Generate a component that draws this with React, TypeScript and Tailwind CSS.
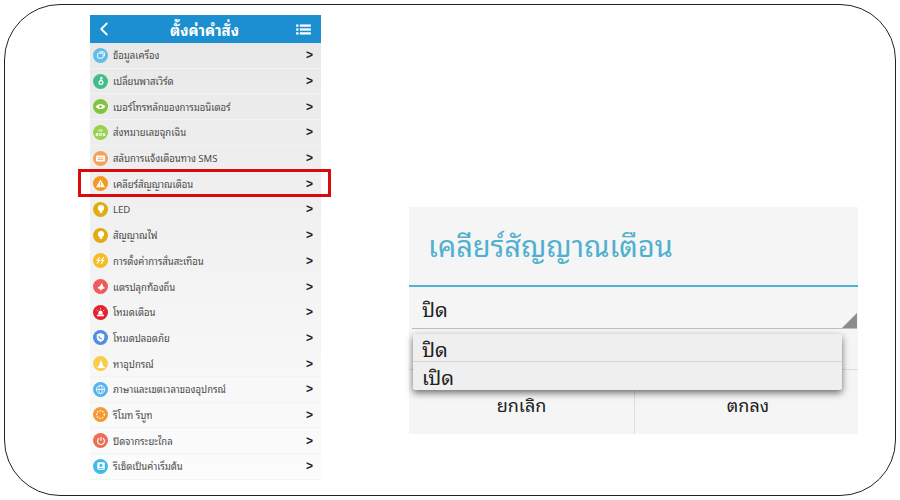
import { ChevronLeft } from "lucide-react";

const font = { thai: "font-['Noto_Sans_Thai_Looped','Loma','Garuda','Tahoma','Noto_Sans','Liberation_Sans',sans-serif]" };

const Bulb = () => (
  <svg viewBox="0 0 16 16" className="w-[10px] h-[10px]">
    <circle cx="8" cy="6.5" r="5" fill="#fff" />
    <rect x="5.8" y="11" width="4.4" height="3.2" rx="1" fill="#fff" />
  </svg>
);

const rows = [
  {
    label: "ข้อมูลเครื่อง",
    color: "bg-[#5fbdea]",
    icon: (
      <svg viewBox="0 0 16 16" className="w-[10px] h-[10px]" fill="none" stroke="#fff" strokeWidth="1.6">
        <rect x="2.5" y="5" width="9" height="8" rx="2" />
        <path d="M5.5 3h6a2 2 0 0 1 2 2v5" />
      </svg>
    ),
  },
  {
    label: "เปลี่ยนพาสเวิร์ด",
    color: "bg-[#41bd8c]",
    icon: (
      <svg viewBox="0 0 16 16" className="w-[10px] h-[10px]" fill="none" stroke="#fff" strokeWidth="2">
        <circle cx="8" cy="10.5" r="3" />
        <path d="M8 7.5V1M8 3.5h3" />
      </svg>
    ),
  },
  {
    label: "เบอร์โทรหลักของการมอนิเตอร์",
    color: "bg-[#82c43e]",
    icon: (
      <svg viewBox="0 0 16 16" className="w-[11px] h-[11px]">
        <path d="M1 8c3.5-5 10.500-5 14 0-3.500 5-10.500 5-14 0z" fill="#fff" />
        <circle cx="8" cy="8" r="2" fill="#82c43e" />
      </svg>
    ),
  },
  {
    label: "ส่งหมายเลขฉุกเฉิน",
    color: "bg-[#98d24f]",
    icon: (
      <svg viewBox="0 0 16 16" className="w-[11px] h-[11px]" fill="none" stroke="#fff" strokeWidth="1.2">
        <path d="M4.500 6a4 4 0 0 1 7 0M6.500 6.500a2 2 0 0 1 3 0" />
        <path d="M1.500 9.500h3v1.500h-3v1.500h3M6.500 9.500h3v3h-3zM14.500 9.500h-3v1.500h3v1.500h-3" />
      </svg>
    ),
  },
  {
    label: "สลับการแจ้งเตือนทาง SMS",
    color: "bg-[#f0a35a]",
    icon: (
      <svg viewBox="0 0 16 16" className="w-[11px] h-[11px]">
        <rect x="1.500" y="3.500" width="13" height="9" rx="1.500" fill="#fff" />
        <path d="M4 7h8M4 9.500h8" stroke="#f0a35a" strokeWidth="1.200" />
      </svg>
    ),
  },
  {
    label: "เคลียร์สัญญาณเตือน",
    color: "bg-[#f29a1f]",
    icon: (
      <svg viewBox="0 0 16 16" className="w-[11px] h-[11px]">
        <path d="M8 2l6.500 11.500h-13z" fill="#fff" />
        <path d="M8 6v4M8 11v1.200" stroke="#f29a1f" strokeWidth="1.300" />
      </svg>
    ),
  },
  { label: "LED", color: "bg-[#e2ab12]", icon: <Bulb /> },
  { label: "สัญญาณไฟ", color: "bg-[#e2ab12]", icon: <Bulb /> },
  {
    label: "การตั้งค่าการสั่นสะเทือน",
    color: "bg-[#f5bd22]",
    icon: (
      <svg viewBox="0 0 16 16" className="w-[11px] h-[11px]" fill="none" stroke="#fff" strokeWidth="1.500">
        <path d="M7 3L3 7.500h3.500L3 12.500M13 3L9 7.500h3.500L9 12.500" />
      </svg>
    ),
  },
  {
    label: "แตรปลุกท้องถิ่น",
    color: "bg-[#ef5b5b]",
    icon: (
      <svg viewBox="0 0 16 16" className="w-[10px] h-[10px]">
        <path d="M9 1.500L12 8l2.500 1.500L9 12l-2 2.500L6 11 2 9.500 7 6z" fill="#fff" />
      </svg>
    ),
  },
  {
    label: "โหมดเตือน",
    color: "bg-[#e0232e]",
    icon: (
      <svg viewBox="0 0 16 16" className="w-[11px] h-[11px]">
        <path d="M5 11V8a3 3 0 0 1 6 0v3z" fill="#fff" />
        <rect x="3" y="11" width="10" height="2.500" fill="#fff" />
        <path d="M8 1.500v2M2.500 4l1.500 1.500M13.500 4L12 5.500" stroke="#fff" strokeWidth="1.200" />
      </svg>
    ),
  },
  {
    label: "โหมดปลอดภัย",
    color: "bg-[#4f8de0]",
    icon: (
      <svg viewBox="0 0 16 16" className="w-[11px] h-[11px]">
        <path d="M8 1.500l5.500 2v4.500c0 3.500-2.500 5.500-5.500 6.500-3-1-5.500-3-5.500-6.500V3.500z" fill="#fff" />
        <path d="M6 5.500c-.5 2.500 1.500 4.500 4 4.500" stroke="#4f8de0" strokeWidth="1.500" fill="none" />
      </svg>
    ),
  },
  {
    label: "หาอุปกรณ์",
    color: "bg-[#f8cf4a]",
    icon: (
      <svg viewBox="0 0 16 16" className="w-[10px] h-[10px]">
        <path d="M8 1.500l4.500 11.500h-9z" fill="#fff" />
        <rect x="2" y="12.500" width="12" height="2" fill="#fff" />
      </svg>
    ),
  },
  {
    label: "ภาษาและเขตเวลาของอุปกรณ์",
    color: "bg-[#54b3ea]",
    icon: (
      <svg viewBox="0 0 16 16" className="w-[11px] h-[11px]" fill="none" stroke="#fff" strokeWidth="1.200">
        <circle cx="8" cy="8" r="6" />
        <ellipse cx="8" cy="8" rx="2.500" ry="6" />
        <path d="M2 8h12" />
      </svg>
    ),
  },
  {
    label: "รีโมท รีบูท",
    color: "bg-[#f49a32]",
    icon: (
      <svg viewBox="0 0 16 16" className="w-[11px] h-[11px]" fill="none" stroke="#fff" strokeWidth="1.800" strokeDasharray="2 2">
        <circle cx="8" cy="8" r="5.500" />
      </svg>
    ),
  },
  {
    label: "ปิดจากระยะไกล",
    color: "bg-[#ec6e55]",
    icon: (
      <svg viewBox="0 0 16 16" className="w-[10px] h-[10px]" fill="none" stroke="#fff" strokeWidth="1.800">
        <path d="M5 3.500a5.500 5.500 0 1 0 6 0M8 1.500v6" />
      </svg>
    ),
  },
  {
    label: "รีเซ็ตเป็นค่าเริ่มต้น",
    color: "bg-[#3fbbe8]",
    icon: (
      <svg viewBox="0 0 16 16" className="w-[10px] h-[10px]">
        <rect x="2" y="2" width="12" height="12" rx="2" fill="#fff" />
        <circle cx="8" cy="7" r="2.500" fill="#3fbbe8" />
        <path d="M4 12h8" stroke="#3fbbe8" strokeWidth="1.200" />
      </svg>
    ),
  },
];

export default function App() {
  return (
    <div className={`relative w-[900px] h-[500px] bg-white p-1 ${font.thai}`}>
      <div className="flex h-full w-full rounded-[56px] border border-[#222] bg-white pl-[85px] pt-[10px]">
        {/* Phone list */}
        <div className="relative w-[231px] shrink-0">
          <div className="flex h-[28px] items-center justify-between bg-[#1b8fd0] pl-[3px] pr-[10px] text-white">
            <ChevronLeft className="h-[22px] w-[22px]" strokeWidth={2} />
            <span className="ml-[-2px] pb-[1px] text-[15px] leading-[20px] font-bold">ตั้งค่าคำสั่ง</span>
            <svg viewBox="0 0 16 12" className="h-[11px] w-[15px]" fill="#fff">
              <rect x="0" y="0.500" width="2.500" height="2.500" />
              <rect x="0" y="4.750" width="2.500" height="2.500" />
              <rect x="0" y="9" width="2.500" height="2.500" />
              <rect x="4" y="0.500" width="12" height="2.500" />
              <rect x="4" y="4.750" width="12" height="2.500" />
              <rect x="4" y="9" width="12" height="2.500" />
            </svg>
          </div>
          <div className="bg-gradient-to-b from-[#e9e9e9] to-[#fcfcfc]">
            {rows.map((row) => (
              <div key={row.label} className="flex h-[25.700px] items-center border-b border-[#f3f3f3] pl-[3px] pr-[8px]">
                <span className={`flex h-[15px] w-[15px] shrink-0 items-center justify-center rounded-full ${row.color}`}>
                  {row.icon}
                </span>
                <span className="ml-[5px] flex-1 text-[9.500px] leading-[16px] whitespace-nowrap text-[#4a4a4a]">{row.label}</span>
                <span className="font-['Liberation_Sans',sans-serif] text-[12px] leading-none font-bold text-[#222]">&gt;</span>
              </div>
            ))}
          </div>
          {/* Red highlight */}
          <div className="absolute left-[-12px] top-[154px] h-[28px] w-[253px] border-[3px] border-[#d80c0c]" />
        </div>

        {/* Dialog */}
        <div className="relative ml-[88px] mt-[192px] flex h-[227px] w-[449px] shrink-0 flex-col bg-[#f5f5f5]">
          <div className="flex h-[80px] items-center border-b-2 border-[#4fb3d4] pb-[4px] pl-[19px] text-[29px] leading-[40px] text-[#4fb0d0]">
            เคลียร์สัญญาณเตือน
          </div>
          <div className="relative ml-[3px] mr-[1px] flex h-[42px] items-center border-b border-[#bdbdbd] pl-[10px] text-[20px] leading-[28px] text-[#222]">
            ปิด
            <span className="absolute bottom-0 right-0 h-0 w-0 border-b-[15px] border-l-[15px] border-b-[#8c8c8c] border-l-transparent" />
          </div>
          <div className="mt-[40px] flex flex-1 border-t border-[#dcdcdc] text-[18px] leading-[24px] text-[#222]">
            <div className="flex flex-1 items-center justify-center border-r border-[#dcdcdc] pt-[3px]">ยกเลิก</div>
            <div className="flex w-[223px] items-center justify-center pl-[3px] pt-[3px]">ตกลง</div>
          </div>
          {/* Dropdown */}
          <div className="absolute left-[4px] top-[127px] w-[429px] rounded-[2px] bg-[#efefef] text-[20px] leading-[24px] text-[#222] shadow-[0_3px_7px_rgba(0,0,0,0.55)]">
            <div className="flex h-[28px] items-center border-b border-[#d6d6d6] pl-[9px]">ปิด</div>
            <div className="flex h-[28px] items-center pl-[9px]">เปิด</div>
          </div>
        </div>
      </div>
    </div>
  );
}
